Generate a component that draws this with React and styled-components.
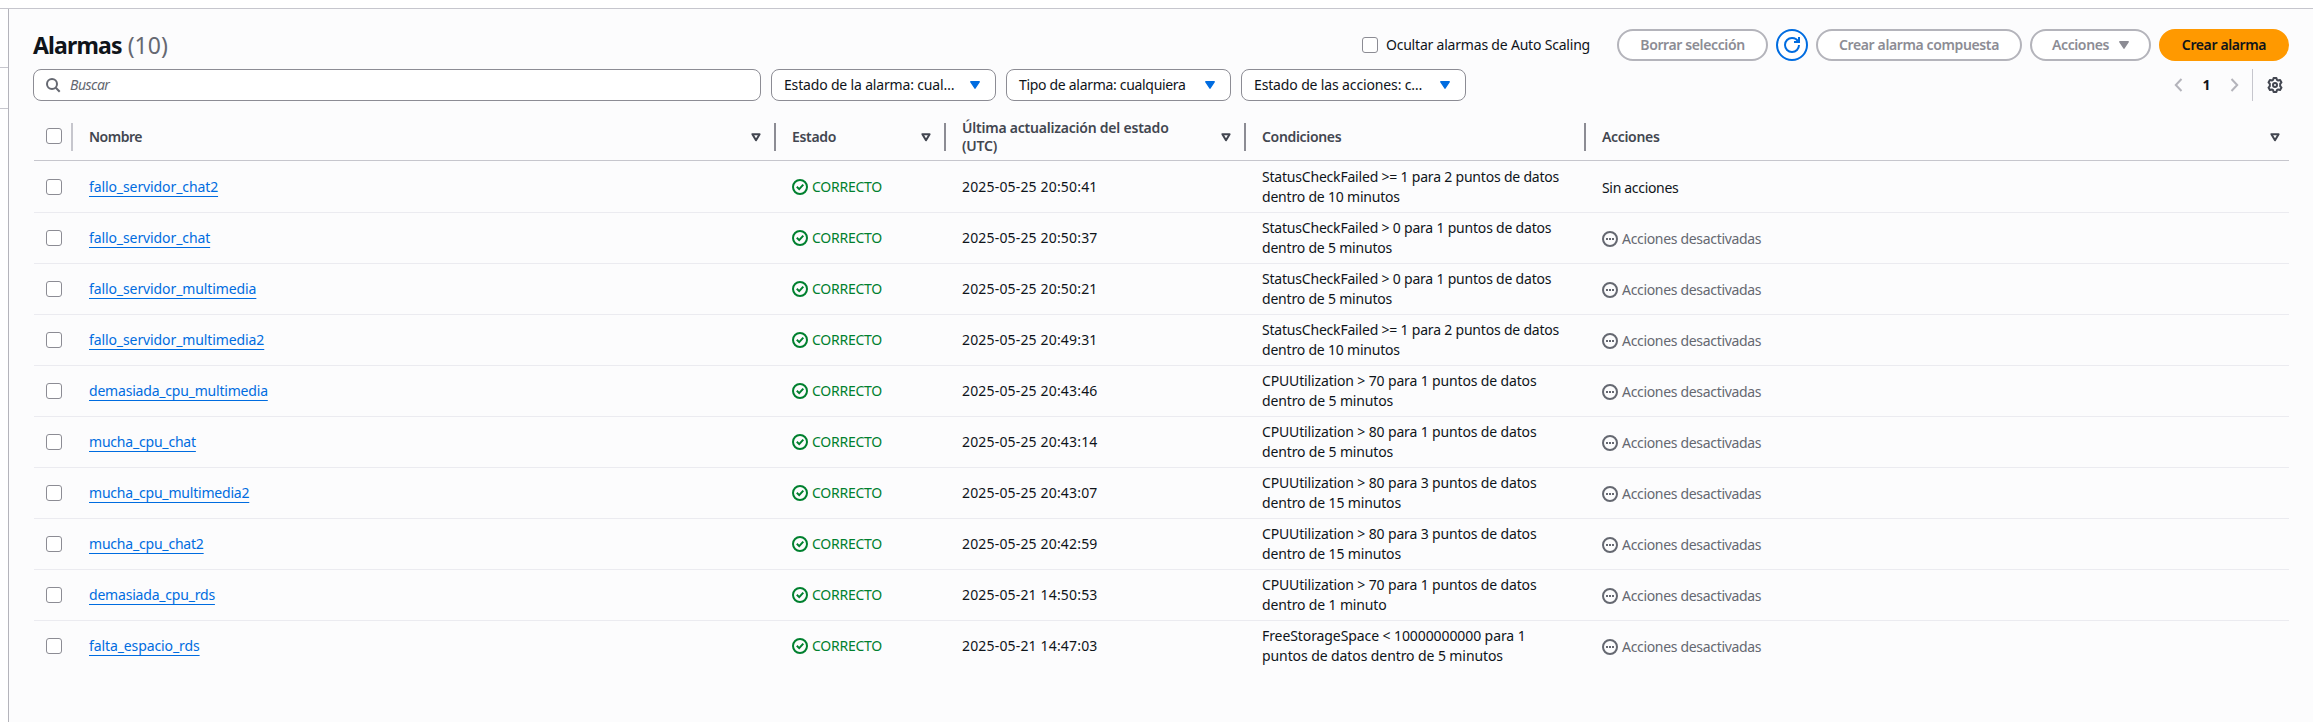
import React from "react";
import styled, { createGlobalStyle } from "styled-components";

const GlobalStyle = createGlobalStyle`
  *, *::before, *::after { box-sizing: border-box; }
  body {
    margin: 0;
    background: #fff;
    color: #0f141a;
    font-family: "Noto Sans", "Open Sans", sans-serif;
    font-size: 14px;
    line-height: 20px;
    overflow: hidden;
  }
`;

const Page = styled.div`
  display: flex;
  flex-direction: column;
  height: 722px;
  padding-top: 8px;
`;

const Shell = styled.div`
  flex: 1;
  display: flex;
  border-top: 1px solid #c6c6cd;
`;

const SideRail = styled.aside`
  width: 9px;
  flex: none;
  padding-top: 58px;
  border-right: 1px solid #b4b4bb;
`;

const RailSection = styled.div`
  height: 42px;
  border: solid #c6c6cd;
  border-width: 1px 0;
`;

const Main = styled.main`
  flex: 1;
  min-width: 0;
  padding: 20px 24px 0;
  background: #fcfcfd;
`;

const HeaderBar = styled.header`
  display: flex;
  align-items: center;
  height: 32px;
`;

const Title = styled.h1`
  flex: 1;
  margin: 0;
  font-size: 23px;
  line-height: 30px;
  letter-spacing: -0.84px;
  font-weight: 700;
`;

const Counter = styled.span`
  margin-left: 6px;
  font-weight: 400;
  letter-spacing: 0;
  color: #656871;
`;

const HideToggle = styled.label`
  display: flex;
  align-items: center;
  gap: 8px;
  margin-right: 27px;
  letter-spacing: -0.2px;
`;

const Checkbox = styled.span`
  display: block;
  flex: none;
  width: 16px;
  height: 16px;
  border: 1px solid #8c8c94;
  border-radius: 3px;
  background: #fff;
`;

const ButtonGroup = styled.div`
  display: flex;
  gap: 8px;
`;

const variants = {
  disabled: "border-color: #b4b4bb; color: #8c8c94; background: #fff;",
  normal: "border-color: #006ce0; color: #006ce0; background: #fff;",
  primary: "border-color: #ff9900; color: #0f141a; background: #ff9900;",
};

const Button = styled.button`
  display: flex;
  align-items: center;
  justify-content: center;
  gap: 10px;
  width: ${(p) => p.$width}px;
  height: 32px;
  padding: 0;
  border: 2px solid;
  border-radius: 16px;
  font: 650 14px/20px "Noto Sans", "Open Sans", sans-serif;
  letter-spacing: -0.38px;
  white-space: nowrap;
  ${(p) => variants[p.$variant]}
`;

const FilterBar = styled.div`
  display: flex;
  align-items: center;
  gap: 10px;
  height: 32px;
  margin-top: 8px;
`;

const Field = styled.div`
  display: flex;
  align-items: center;
  height: 32px;
  border: 1px solid #8c8c94;
  border-radius: 8px;
  background: #fff;
`;

const SearchField = styled(Field)`
  width: 728px;
  padding-left: 11px;
  gap: 9px;
  color: #656871;
  font-style: italic;
  letter-spacing: -0.5px;
`;

const Select = styled(Field)`
  width: 225px;
  justify-content: space-between;
  padding: 0 15px 0 12px;
  letter-spacing: ${(p) => p.$track}px;
  white-space: nowrap;
  color: #0f141a;
`;

const Pagination = styled.nav`
  display: flex;
  align-items: center;
  margin-left: auto;
  height: 32px;
  padding-right: 6px;
`;

const PageNumber = styled.span`
  width: 47px;
  text-align: center;
  font-weight: 700;
`;

const PageDivider = styled.span`
  width: 1px;
  height: 32px;
  margin: 0 14px 0 13px;
  background: #c6c6cd;
`;

const Table = styled.div`
  margin: 13px 0 0 1px;
`;

const Row = styled.div`
  display: grid;
  grid-template-columns: 39px 703px 170px 300px 340px 1fr;
  align-items: center;
  height: 51px;
  border-bottom: 1px solid ${(p) => (p.$last ? "transparent" : "#ebebf0")};
`;

const HeadRow = styled(Row)`
  height: 47px;
  margin-bottom: 1px;
  border-bottom-color: #c6c6cd;
`;

const SelectCell = styled.div`
  padding-left: 12px;
`;

const HeadSelectCell = styled(SelectCell)`
  display: flex;
  align-items: center;
  justify-content: space-between;
  height: 28px;
  padding-bottom: 2px;
  border-right: 2px solid #c6c6cd;
`;

const HeadCell = styled.div`
  display: flex;
  align-items: center;
  justify-content: space-between;
  height: 28px;
  padding: 0 ${(p) => (p.$last ? 9 : 13)}px 0 16px;
  border-right: ${(p) => (p.$last ? "0" : "2px solid #8c8c94")};
  color: #424650;
  font-weight: 600;
  line-height: 18px;
  letter-spacing: ${(p) => p.$track || -0.33}px;
`;

const HeadLabel = styled.span`
  max-width: 230px;
`;

const Cell = styled.div`
  display: flex;
  align-items: center;
  gap: 4px;
  padding-left: 16px;
  white-space: nowrap;
`;

const NameLink = styled.a`
  color: #006ce0;
  letter-spacing: ${(p) => p.$track}px;
  text-decoration: underline;
  text-decoration-thickness: 1px;
  text-underline-offset: 4px;
  text-decoration-skip-ink: none;
`;

const StatusCell = styled(Cell)`
  gap: 4px;
  color: #00802f;
  letter-spacing: -0.26px;
`;

const DateCell = styled(Cell)`
  letter-spacing: 0.17px;
`;

const ConditionCell = styled(Cell)`
  white-space: pre-line;
  letter-spacing: ${(p) => p.$track}px;
`;

const ActionCell = styled(Cell)`
  padding-top: 2px;
  letter-spacing: -0.32px;
  color: ${(p) => (p.$muted ? "#656871" : "#0f141a")};
`;

const Icon = styled.svg`
  display: block;
  flex: none;
  fill: none;
  stroke: currentColor;
  stroke-width: 2;
`;

const Caret = ({ color }) => (
  <Icon width="10" height="8" viewBox="0 0 10 8" color={color}>
    <path d="M0.8 .8H9.2L5 7.2Z" fill="currentColor" strokeWidth="1.4" strokeLinejoin="round" />
  </Icon>
);

const SortIcon = () => (
  <Icon width="10" height="9" viewBox="0 0 10 9">
    <path d="M1.4 1.2H8.6L5 7.2Z" strokeLinejoin="round" />
  </Icon>
);

const SearchIcon = () => (
  <Icon width="16" height="16" viewBox="0 0 16 16">
    <circle cx="7" cy="7" r="5" />
    <path d="M10.8 10.8L14.7 14.7" />
  </Icon>
);

const RefreshIcon = () => (
  <Icon width="16" height="16" viewBox="0 0 16 16">
    <path d="M10 5h5V0" />
    <path d="M15 8a6.96 6.96 0 0 1-7 7 6.96 6.96 0 0 1-7-7 6.96 6.96 0 0 1 7-7 6.87 6.87 0 0 1 6.3 4" />
  </Icon>
);

const ChevronIcon = ({ next }) => (
  <Icon width="9" height="14" viewBox="0 0 9 14" color="#b4b4bb">
    <path d={next ? "M1.5 1L7.2 7L1.5 13" : "M7.5 1L1.8 7L7.5 13"} />
  </Icon>
);

const GearIcon = () => (
  <Icon width="16" height="16" viewBox="0 0 16 16" color="#424650">
    <path
      strokeLinejoin="round"
      d="M6.6 1h2.8l.5 1.8 1.3.7 1.9-.5 1.4 2.4-1.3 1.4v2.4l1.3 1.4-1.4 2.4-1.9-.5-1.3.7-.5 1.8H6.6l-.5-1.8-1.3-.7-1.9.5-1.4-2.4 1.3-1.4V6.8L1.5 5.4 2.9 3l1.9.5 1.3-.7z"
    />
    <circle cx="8" cy="8" r="2" />
  </Icon>
);

const CheckIcon = () => (
  <Icon width="16" height="16" viewBox="0 0 16 16">
    <circle cx="8" cy="8" r="7" />
    <path d="M4.8 7.8L7.2 10.1L11.3 5.6" />
  </Icon>
);

const DotsIcon = () => (
  <Icon width="16" height="16" viewBox="0 0 16 16">
    <circle cx="8" cy="8" r="7" />
    <path d="M4 8H6M7 8H9M10 8H12" />
  </Icon>
);

const alarms = [
  ["fallo_servidor_chat2", "2025-05-25 20:50:41", "StatusCheckFailed >= 1 para 2 puntos de datos\ndentro de 10 minutos", false],
  ["fallo_servidor_chat", "2025-05-25 20:50:37", "StatusCheckFailed > 0 para 1 puntos de datos\ndentro de 5 minutos", true],
  ["fallo_servidor_multimedia", "2025-05-25 20:50:21", "StatusCheckFailed > 0 para 1 puntos de datos\ndentro de 5 minutos", true],
  ["fallo_servidor_multimedia2", "2025-05-25 20:49:31", "StatusCheckFailed >= 1 para 2 puntos de datos\ndentro de 10 minutos", true],
  ["demasiada_cpu_multimedia", "2025-05-25 20:43:46", "CPUUtilization > 70 para 1 puntos de datos\ndentro de 5 minutos", true],
  ["mucha_cpu_chat", "2025-05-25 20:43:14", "CPUUtilization > 80 para 1 puntos de datos\ndentro de 5 minutos", true],
  ["mucha_cpu_multimedia2", "2025-05-25 20:43:07", "CPUUtilization > 80 para 3 puntos de datos\ndentro de 15 minutos", true],
  ["mucha_cpu_chat2", "2025-05-25 20:42:59", "CPUUtilization > 80 para 3 puntos de datos\ndentro de 15 minutos", true],
  ["demasiada_cpu_rds", "2025-05-21 14:50:53", "CPUUtilization > 70 para 1 puntos de datos\ndentro de 1 minuto", true],
  ["falta_espacio_rds", "2025-05-21 14:47:03", "FreeStorageSpace < 10000000000 para 1\npuntos de datos dentro de 5 minutos", true],
];

const conditionTrack = (text) => {
  if (text.startsWith("Status")) return -0.2;
  return text.startsWith("Free") ? -0.09 : -0.145;
};

const filters = [
  { label: "Estado de la alarma: cual…", track: -0.17 },
  { label: "Tipo de alarma: cualquiera", track: -0.31 },
  { label: "Estado de las acciones: c…", track: -0.14 },
];

const columns = [
  { label: "Nombre", sortable: true, track: -0.48 },
  { label: "Estado", sortable: true },
  { label: "Última actualización del estado (UTC)", sortable: true, track: -0.22 },
  { label: "Condiciones" },
  { label: "Acciones", sortable: true },
];

export default function App() {
  return (
    <>
      <GlobalStyle />
      <Page>
        <Shell>
          <SideRail>
            <RailSection />
          </SideRail>
          <Main>
            <HeaderBar>
              <Title>
                Alarmas<Counter>(10)</Counter>
              </Title>
              <HideToggle>
                <Checkbox />
                Ocultar alarmas de Auto Scaling
              </HideToggle>
              <ButtonGroup>
                <Button $variant="disabled" $width={151}>Borrar selección</Button>
                <Button $variant="normal" $width={32} aria-label="Actualizar"><RefreshIcon /></Button>
                <Button $variant="disabled" $width={206}>Crear alarma compuesta</Button>
                <Button $variant="disabled" $width={121}>Acciones<Caret color="#8c8c94" /></Button>
                <Button $variant="primary" $width={130}>Crear alarma</Button>
              </ButtonGroup>
            </HeaderBar>
            <FilterBar>
              <SearchField>
                <SearchIcon />
                Buscar
              </SearchField>
              {filters.map(({ label, track }) => (
                <Select key={label} $track={track}>
                  {label}
                  <Caret color="#006ce0" />
                </Select>
              ))}
              <Pagination>
                <ChevronIcon />
                <PageNumber>1</PageNumber>
                <ChevronIcon next />
                <PageDivider />
                <GearIcon />
              </Pagination>
            </FilterBar>
            <Table>
              <HeadRow>
                <HeadSelectCell>
                  <Checkbox />
                </HeadSelectCell>
                {columns.map((c, i) => (
                  <HeadCell key={c.label} $track={c.track} $last={i === columns.length - 1}>
                    <HeadLabel>{c.label}</HeadLabel>
                    {c.sortable && <SortIcon />}
                  </HeadCell>
                ))}
              </HeadRow>
              {alarms.map(([name, updated, condition, muted], i) => (
                <Row key={name} $last={i === alarms.length - 1}>
                  <SelectCell>
                    <Checkbox />
                  </SelectCell>
                  <Cell>
                    <NameLink $track={name.includes("cpu") ? -0.2 : -0.1}>{name}</NameLink>
                  </Cell>
                  <StatusCell>
                    <CheckIcon />
                    CORRECTO
                  </StatusCell>
                  <DateCell>{updated}</DateCell>
                  <ConditionCell $track={conditionTrack(condition)}>
                    {condition}
                  </ConditionCell>
                  <ActionCell $muted={muted}>
                    {muted && <DotsIcon />}
                    {muted ? "Acciones desactivadas" : "Sin acciones"}
                  </ActionCell>
                </Row>
              ))}
            </Table>
          </Main>
        </Shell>
      </Page>
    </>
  );
}
